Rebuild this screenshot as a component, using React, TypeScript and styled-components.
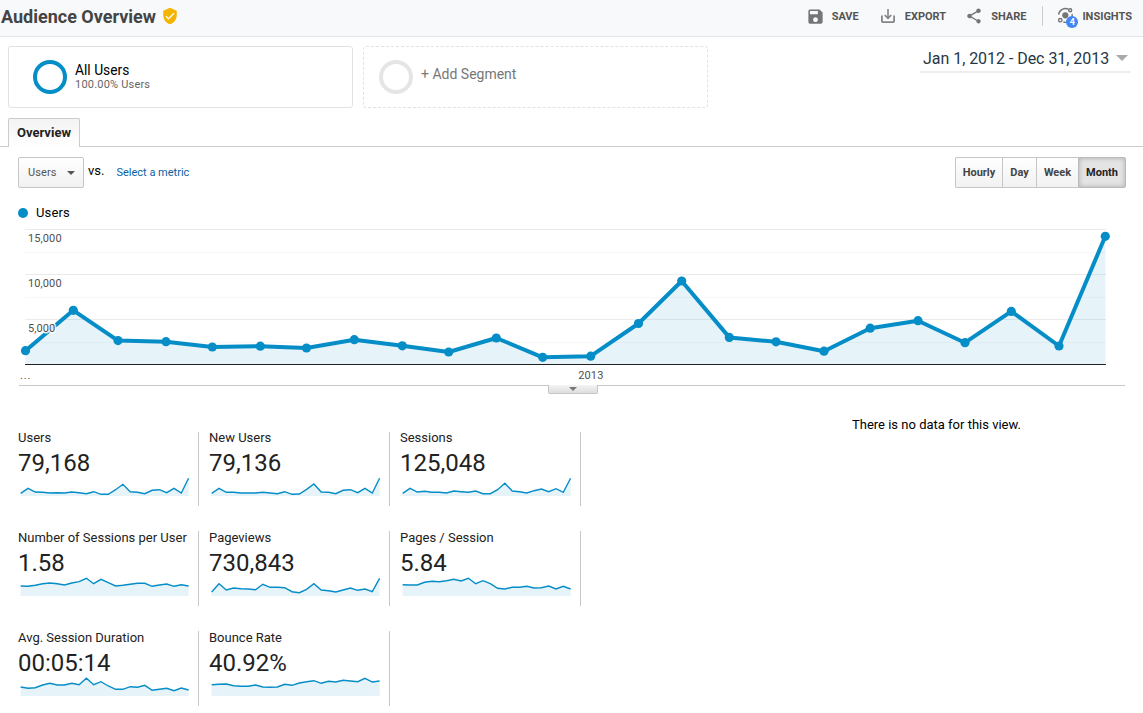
import React from "react";
import styled, { createGlobalStyle } from "styled-components";
import { MdSave, MdShare, MdVerifiedUser } from "react-icons/md";

const GlobalStyle = createGlobalStyle`
  * {
    box-sizing: border-box;
  }
  body {
    margin: 0;
    background: #fff;
    color: #000;
    font-family: Roboto, "Liberation Sans", sans-serif;
    overflow: hidden;
  }
  svg {
    display: block;
    flex: none;
  }
`

const BLUE = "#058dc7";

const chartPoints = [
  [25.5, 350.7], [73.3, 310.3], [118, 340.6], [166, 341.7], [212.3, 347], [260.3, 346.2],
  [306.5, 348], [354.3, 339.7], [402.3, 345.8], [448.7, 352], [496.3, 338], [542.7, 357.3],
  [590.7, 356.2], [638.5, 323.5], [681.7, 281], [729.3, 337.4], [776, 341.8], [824, 351.2],
  [870.2, 328.2], [918, 320.7], [965, 342.7], [1011.3, 311.4], [1059, 346], [1105.3, 236.3],
];

const metrics = [
  { label: "Users", value: "79,168", data: [8, 23, 12, 11, 9, 10, 9, 12, 10, 7, 13, 5, 5, 19, 35, 13, 11, 7, 17, 19, 10, 23, 9, 53] },
  { label: "New Users", value: "79,136", data: [8, 23, 11, 11, 9, 9, 9, 11, 9, 7, 13, 5, 6, 20, 36, 12, 11, 7, 17, 19, 10, 23, 9, 53] },
  { label: "Sessions", value: "125,048", data: [8, 23, 12, 14, 11, 11, 9, 15, 13, 11, 15, 7, 7, 19, 38, 15, 13, 9, 16, 21, 13, 22, 11, 53] },
  { label: "Number of Sessions per User", value: "1.58", data: [30, 29, 32, 37, 39, 37, 33, 39, 43, 53, 37, 50, 40, 30, 32, 35, 38, 38, 29, 33, 36, 29, 34, 30] },
  { label: "Pageviews", value: "730,843", data: [12, 37, 18, 24, 22, 21, 19, 35, 26, 26, 25, 13, 10, 20, 37, 18, 16, 12, 18, 24, 17, 21, 13, 53] },
  { label: "Pages / Session", value: "5.84", data: [34, 33, 33, 41, 44, 43, 46, 50, 45, 53, 37, 46, 37, 23, 21, 26, 26, 29, 24, 25, 30, 21, 29, 21] },
  { label: "Avg. Session Duration", value: "00:05:14", data: [27, 23, 25, 33, 38, 33, 33, 38, 34, 53, 34, 43, 30, 20, 20, 28, 26, 32, 17, 20, 23, 16, 24, 18] },
  { label: "Bounce Rate", value: "40.92%", data: [34, 35, 36, 31, 29, 29, 33, 27, 26, 27, 35, 32, 39, 43, 46, 38, 44, 42, 47, 45, 43, 53, 42, 45] },
];

function ExportIcon() {
  return (
    <svg width="16" height="16" viewBox="0 0 16 16" fill="none" stroke="#858585" strokeWidth="1.8">
      <path d="M1.9 7.5v5.8q0 .9.9.9h10.4q.9 0 .9-.9V7.5" />
      <path d="M8 1v9M4.7 7 8 10.3 11.3 7" strokeWidth="1.6" />
    </svg>
  )
}

function InsightsIcon() {
  return (
    <svg width="18" height="18" viewBox="0 0 18 18" fill="none" stroke="#757575" strokeWidth="1.4">
      <circle cx="8.3" cy="8.3" r="3.1" fill="#757575" stroke="none" />
      <path d="M1.6 7.6A6.8 6.8 0 0 1 11.6 2.4M15 7a6.8 6.8 0 0 1-8.6 8" />
      <circle cx="13.2" cy="3.2" r="1.5" />
      <circle cx="3.3" cy="13.2" r="1.7" />
    </svg>
  )
}

function UsersChart() {
  const line = chartPoints.map((p) => p.join(",")).join(" ");
  return (
    <svg width="1143" height="160" viewBox="0 225 1143 160">
      {[229.5, 274.5, 319.5].map((y) => (
        <path key={y} d={`M25 ${y}H1106`} stroke="#ebebeb" />
      ))}
      {[252.5, 297.5, 342.5].map((y) => (
        <path key={y} d={`M25 ${y}H1106`} stroke="#f7f7f7" />
      ))}
      <polygon points={`25.5,364 ${line} 1105.5,364`} fill={BLUE} fillOpacity="0.1" />
      <path d="M25 364.5H1106" stroke="#222" />
      <polyline points={line} fill="none" stroke={BLUE} strokeWidth="4" strokeLinejoin="round" />
      {chartPoints.map(([x, y]) => (
        <circle key={x} cx={x} cy={y} r="4.6" fill={BLUE} />
      ))}
      <AxisText x="28" y="242">15,000</AxisText>
      <AxisText x="28" y="287">10,000</AxisText>
      <AxisText x="28" y="332">5,000</AxisText>
      <AxisText x="20" y="379" $spacing={0.9}>...</AxisText>
      <AxisText x="578.3" y="379">2013</AxisText>
    </svg>
  )
}

function Sparkline({ data }: { data: number[] }) {
  const line = data.map((v, i) => `${(2.7 + i * 7.3).toFixed(1)},${(20 - v / 3).toFixed(1)}`).join(" ");
  return (
    <svg width="172" height="20" viewBox="0 0 172 20">
      <polygon points={`2.5,20 ${line} 170.7,20`} fill={BLUE} fillOpacity="0.1" />
      <polyline points={line} fill="none" stroke={BLUE} strokeWidth="1.4" />
    </svg>
  )
}

export default function App() {
  return (
    <>
      <GlobalStyle />
      <Header>
        <Title>Audience Overview</Title>
        <MdVerifiedUser size={18} color="#f4b400" />
        <Actions>
          <Action $gap={7}><MdSave size={19} />SAVE</Action>
          <Action $gap={9} $left={21}><ExportIcon />EXPORT</Action>
          <Action $gap={8}><MdShare size={18} />SHARE</Action>
          <Divider />
          <Action $gap={7}>
            <IconWrap><InsightsIcon /><Badge>4</Badge></IconWrap>
            INSIGHTS
          </Action>
        </Actions>
      </Header>
      <Segments>
        <Segment>
          <Ring $color={BLUE} />
          <SegmentText>
            <SegmentName>All Users</SegmentName>
            <SegmentShare>100.00% Users</SegmentShare>
          </SegmentText>
        </Segment>
        <Segment $dashed>
          <Ring $color="#e5e5e5" />
          <AddSegment>+ Add Segment</AddSegment>
        </Segment>
        <DateRange>
          <DateText>Jan 1, 2012 - Dec 31, 2013</DateText>
          <Caret $size={6} $color="#aaa" />
        </DateRange>
      </Segments>
      <Tabs>
        <Tab>Overview</Tab>
      </Tabs>
      <Toolbar>
        <MetricSelect>Users<Caret $size={4} $color="#555" /></MetricSelect>
        <Versus>vs.</Versus>
        <MetricLink>Select a metric</MetricLink>
        <Periods>
          <Period $width={47}>Hourly</Period>
          <Period $width={34}>Day</Period>
          <Period $width={42}>Week</Period>
          <Period $width={48} $active>Month</Period>
        </Periods>
      </Toolbar>
      <Legend><Dot />Users</Legend>
      <UsersChart />
      <Separator>
        <Handle><Caret $size={4} $color="#777" /></Handle>
      </Separator>
      <Bottom>
        <Metrics>
          {metrics.map((m) => (
            <Metric key={m.label}>
              <MetricLabel>{m.label}</MetricLabel>
              <MetricValue>{m.value}</MetricValue>
              <Sparkline data={m.data} />
            </Metric>
          ))}
        </Metrics>
        <NoData>There is no data for this view.</NoData>
      </Bottom>
    </>
  )
}

const Header = styled.header`
  height: 37px;
  display: flex;
  align-items: center;
  padding: 0 11px 4px 1px;
  background: #f8f9fb;
  border-bottom: 1px solid #e3e5e8;
`
const Title = styled.h1`
  margin: 2px 5px 0 0;
  font-size: 18px;
  font-weight: 700;
  line-height: 32px;
  color: #444;
`
const Actions = styled.div`
  margin-left: auto;
  display: flex;
  align-items: center;
`
const Action = styled.div<{ $gap: number; $left?: number }>`
  display: flex;
  align-items: center;
  gap: ${(p) => p.$gap}px;
  margin-left: ${(p) => p.$left ?? 19}px;
  font-size: 11px;
  font-weight: 700;
  color: #555;

  > svg {
    color: #757575;
  }
`
const Divider = styled.div`
  width: 1px;
  height: 20px;
  margin: 0 -5px 0 16px;
  background: #ccc;
`
const IconWrap = styled.div`
  position: relative;
`
const Badge = styled.span`
  position: absolute;
  left: 9px;
  top: 9px;
  width: 12px;
  height: 12px;
  border-radius: 50%;
  background: #4285f4;
  color: #fff;
  font-size: 9px;
  line-height: 12px;
  text-align: center;
`
const Segments = styled.section`
  display: flex;
  align-items: flex-start;
  gap: 10px;
  padding: 9px 12px 0 8px;
`
const Segment = styled.div<{ $dashed?: boolean }>`
  width: 345px;
  height: 62px;
  flex: none;
  display: flex;
  gap: 8px;
  padding: 13px 0 0 ${(p) => (p.$dashed ? 15 : 24)}px;
  border: 1px ${(p) => (p.$dashed ? "dashed" : "solid")} #e2e2e2;
  border-radius: 3px;
`
const Ring = styled.div<{ $color: string }>`
  width: 34px;
  height: 34px;
  flex: none;
  border: 4px solid ${(p) => p.$color};
  border-radius: 50%;
`
const SegmentText = styled.div`
  padding-top: 2px;
`
const SegmentName = styled.div`
  font-size: 13.8px;
  line-height: 16px;
`
const SegmentShare = styled.div`
  font-size: 11px;
  line-height: 14px;
  letter-spacing: 0.2px;
  color: #666;
`
const AddSegment = styled.div`
  font-size: 14px;
  line-height: 29px;
  color: #777;
`
const DateRange = styled.div`
  width: 211px;
  height: 27px;
  margin-left: auto;
  display: flex;
  align-items: center;
  justify-content: space-between;
  padding: 0 3px 1px;
  border-bottom: 2px solid #eee;
`
const DateText = styled.span`
  font-size: 16px;
  letter-spacing: -0.04px;
  white-space: nowrap;
  color: #263746;
`
const Caret = styled.span<{ $size: number; $color: string }>`
  border: ${(p) => p.$size}px solid transparent;
  border-top-color: ${(p) => p.$color};
  border-bottom: 0;
`
const Tabs = styled.nav`
  height: 29px;
  margin-top: 10px;
  padding-left: 8px;
  border-bottom: 1px solid #ccc;
`
const Tab = styled.div`
  width: 72px;
  height: 29px;
  border: 1px solid #ccc;
  border-bottom: 0;
  border-radius: 2px 2px 0 0;
  background: linear-gradient(#f3f3f3, #fff);
  font-size: 13px;
  font-weight: 700;
  line-height: 28px;
  text-align: center;
  color: #222;
`
const Toolbar = styled.div`
  display: flex;
  align-items: center;
  padding: 10px 17px 0 18px;
`
const MetricSelect = styled.button`
  width: 66px;
  height: 31px;
  display: flex;
  align-items: center;
  justify-content: space-between;
  padding: 0 8px 0 9px;
  border: 1px solid #c6c6c6;
  border-radius: 2px;
  background: linear-gradient(#fff, #f1f1f1);
  font: 11px Roboto, sans-serif;
  letter-spacing: 0.1px;
  color: #555;
`
const Versus = styled.span`
  margin: -4px 12px 0 4px;
  font-size: 13px;
`
const MetricLink = styled.a`
  font-size: 11px;
  color: #0b62a4;
`
const Periods = styled.div`
  display: flex;
  margin-left: auto;
`
const Period = styled.button<{ $width: number; $active?: boolean }>`
  width: ${(p) => p.$width}px;
  height: 31px;
  padding: 0;
  border: 1px solid ${(p) => (p.$active ? "#bbb" : "#c6c6c6")};
  border-right-width: ${(p) => (p.$active ? 1 : 0)}px;
  background: ${(p) => (p.$active ? "#e4e4e4" : "linear-gradient(#fff, #f1f1f1)")};
  box-shadow: ${(p) => (p.$active ? "inset 0 0 5px rgba(0, 0, 0, 0.25)" : "none")};
  font: 700 11px Roboto, sans-serif;
  color: ${(p) => (p.$active ? "#222" : "#444")};

  &:first-child {
    border-radius: 2px 0 0 2px;
  }
  &:last-child {
    border-radius: 0 2px 2px 0;
  }
`
const Legend = styled.div`
  height: 37px;
  display: flex;
  align-items: center;
  gap: 8px;
  padding: 12px 0 0 18px;
  font-size: 13px;
  letter-spacing: 0.15px;
`
const Dot = styled.span`
  width: 10px;
  height: 10px;
  border-radius: 50%;
  background: ${BLUE};
`
const AxisText = styled.text<{ $spacing?: number }>`
  font-size: 11px;
  letter-spacing: ${(p) => p.$spacing ?? 0.1}px;
  fill: #505050;
  paint-order: stroke;
  stroke: rgba(255, 255, 255, 0.85);
  stroke-width: 3px;
`
const Separator = styled.div`
  height: 10px;
  margin: 0 18px 0 19px;
  border-top: 1px solid #c9c9c9;
`
const Handle = styled.div`
  width: 50px;
  height: 9px;
  margin: -1px 0 0 529px;
  display: flex;
  align-items: center;
  justify-content: center;
  border: 1px solid #c6c6c6;
  border-top: 0;
  border-radius: 0 0 2px 2px;
  background: linear-gradient(#f3f3f3, #dedede);
`
const Bottom = styled.section`
  display: flex;
  padding-left: 18px;
`
const Metrics = styled.div`
  width: 573px;
  display: grid;
  grid-template-columns: repeat(3, 191px);
  grid-template-rows: 74px 75px 75px;
  row-gap: 25px;
  margin-top: 37px;
`
const Metric = styled.div`
  width: 181px;
  padding-top: 1px;
  border-right: 1px solid #c9c9c9;

  &:nth-child(-n + 3) {
    padding-top: 0;
  }
`
const MetricLabel = styled.div`
  font-size: 13px;
  line-height: 12px;
  white-space: nowrap;
  color: #222;
`
const MetricValue = styled.div`
  font-size: 24px;
  line-height: 30px;
  margin-top: 4px;
  margin-bottom: -2px;
  color: #222;
`
const NoData = styled.div`
  margin: 21px 0 0 261px;
  font-size: 13px;
  line-height: 17px;
`
